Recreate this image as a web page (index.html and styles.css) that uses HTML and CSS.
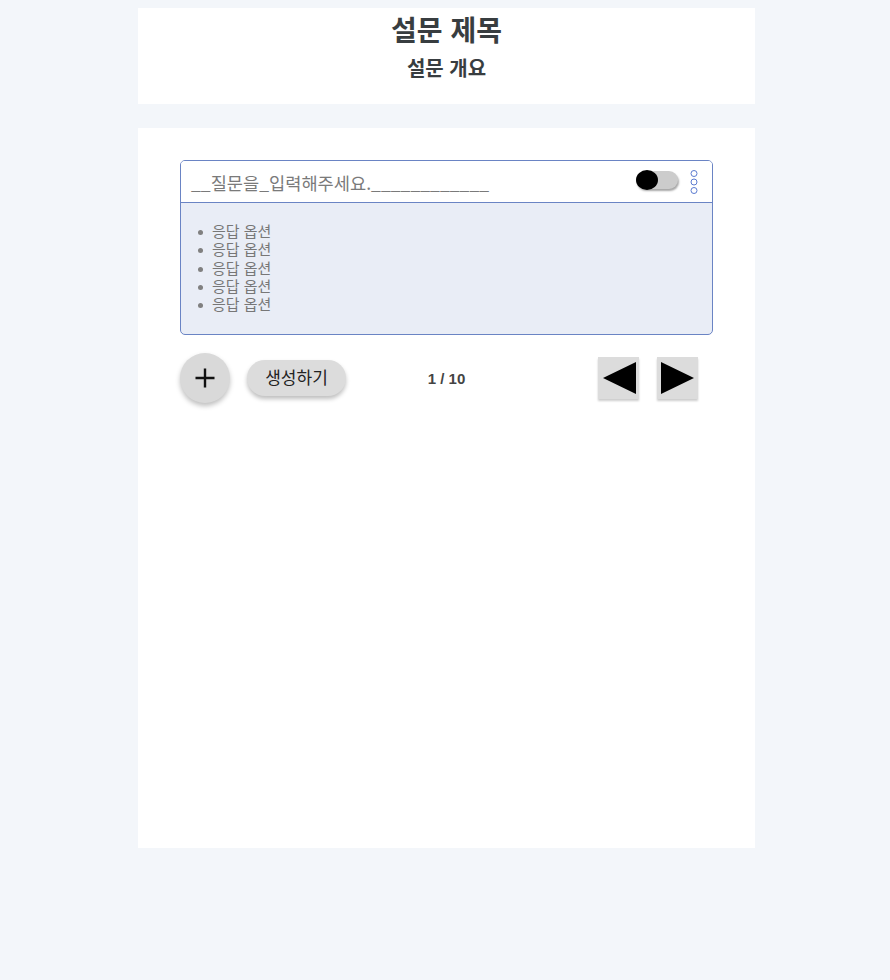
FILE: index.html
```html
<!DOCTYPE html>
<html lang="ko">
<head>
<meta charset="utf-8">
<link rel="stylesheet" href="styles.css">
</head>
<body>
<div class="page">
  <header class="card head">
    <h1 class="title">설문 제목</h1>
    <h2 class="subtitle">설문 개요</h2>
  </header>
  <main class="card main">
    <section class="question">
      <div class="q-head">
        <span class="q-text">__질문을_입력해주세요.____________</span>
        <span class="toggle"><span class="knob"></span></span>
        <svg class="kebab" width="8" height="26" viewBox="0 0 8 26">
          <circle cx="4" cy="4.5" r="3" fill="none" stroke="#5b7bd0" stroke-width="1"/>
          <circle cx="4" cy="13" r="3" fill="none" stroke="#5b7bd0" stroke-width="1"/>
          <circle cx="4" cy="21.5" r="3" fill="none" stroke="#5b7bd0" stroke-width="1"/>
        </svg>
      </div>
      <ul class="options">
        <li>응답 옵션</li>
        <li>응답 옵션</li>
        <li>응답 옵션</li>
        <li>응답 옵션</li>
        <li>응답 옵션</li>
      </ul>
    </section>
    <div class="controls">
      <div class="left">
        <button class="add">
          <svg width="22" height="22" viewBox="0 0 22 22"><path d="M11 1.5V20.5M1.5 11H20.5" stroke="#111" stroke-width="2.4"/></svg>
        </button>
        <button class="create">생성하기</button>
      </div>
      <div class="pager">1 / 10</div>
      <div class="right">
        <button class="arrow"><svg width="36" height="36" viewBox="0 0 36 36"><polygon points="2,18 35,2 35,34" fill="#000"/></svg></button>
        <button class="arrow"><svg width="36" height="36" viewBox="0 0 36 36"><polygon points="34,18 1,2 1,34" fill="#000"/></svg></button>
      </div>
    </div>
  </main>
</div>
</body>
</html>
```
FILE: styles.css
```css
html, body {
  margin: 0;
  padding: 0;
  background: #f3f6fa;
}
body {
  font-family: "Noto Sans CJK KR", "Noto Sans", sans-serif;
  color: #333;
}
.page {
  width: 617px;
  margin-left: 138px;
  padding-top: 8px;
  padding-bottom: 40px;
}
.card {
  background: #fff;
}
.head {
  height: 96px;
  box-sizing: border-box;
  padding-top: 1px;
  text-align: center;
}
.title {
  margin: 0;
  font-size: 28px;
  line-height: 40px;
  font-weight: 700;
  color: #383d40;
}
.subtitle {
  margin: 0;
  font-size: 20px;
  line-height: 37px;
  font-weight: 700;
  color: #383d40;
}
.main {
  margin-top: 24px;
  height: 720px;
  box-sizing: border-box;
  padding: 32px 42px 0 42px;
}
.question {
  border: 1px solid #6a84c4;
  border-radius: 5px;
  background: #e9edf6;
  overflow: hidden;
}
.q-head {
  display: flex;
  align-items: center;
  height: 41px;
  padding: 0 14px 0 10px;
  background: #fff;
  border-bottom: 1px solid #6a84c4;
}
.q-text {
  flex: 1;
  font-size: 17.6px;
  color: #7a7a7a;
  padding-top: 1px;
}
.toggle {
  position: relative;
  width: 42px;
  height: 18px;
  border-radius: 9px;
  background: #cccccc;
  box-shadow: 1px 2px 2px rgba(0,0,0,0.35);
  margin-right: 12px;
  margin-top: -3px;
}
.knob {
  position: absolute;
  left: 0;
  top: -1px;
  width: 22px;
  height: 20px;
  border-radius: 50%;
  background: #000;
}
.kebab {
  display: block;
  margin-top: 1px;
}
.options {
  margin: 0;
  padding: 19px 0 21px 31px;
  list-style: none;
  color: #777;
  font-size: 15px;
  line-height: 18.3px;
}
.options li {
  position: relative;
}
.options li::before {
  content: "";
  position: absolute;
  left: -14px;
  top: 8px;
  width: 5px;
  height: 5px;
  border-radius: 50%;
  background: #808080;
}
.controls {
  display: grid;
  grid-template-columns: 1fr auto 1fr;
  align-items: center;
  margin-top: 18px;
}
.left {
  display: flex;
  align-items: center;
  gap: 17px;
}
.add {
  width: 50px;
  height: 50px;
  border-radius: 50%;
  border: none;
  background: #d9d9d9;
  box-shadow: 0 3px 5px rgba(0,0,0,0.25);
  display: flex;
  align-items: center;
  justify-content: center;
  padding: 0;
}
.create {
  width: 99px;
  height: 36px;
  border-radius: 18px;
  border: none;
  background: #dcdcdc;
  box-shadow: 0 3px 4px rgba(0,0,0,0.25);
  font-family: "Noto Sans CJK KR", sans-serif;
  font-size: 17px;
  color: #222;
  padding: 0 0 3px 0;
}
.pager {
  font-family: "Liberation Sans", Arial, sans-serif;
  font-weight: 700;
  font-size: 15px;
  color: #444;
}
.right {
  display: flex;
  justify-content: flex-end;
  gap: 18px;
  padding-right: 15px;
}
.arrow {
  width: 41px;
  height: 42px;
  border: none;
  background: #dcdcdc;
  box-shadow: 0 2px 2px rgba(0,0,0,0.2);
  padding: 0;
  display: flex;
  align-items: center;
  justify-content: center;
}
.arrow svg {
  display: block;
}
```
